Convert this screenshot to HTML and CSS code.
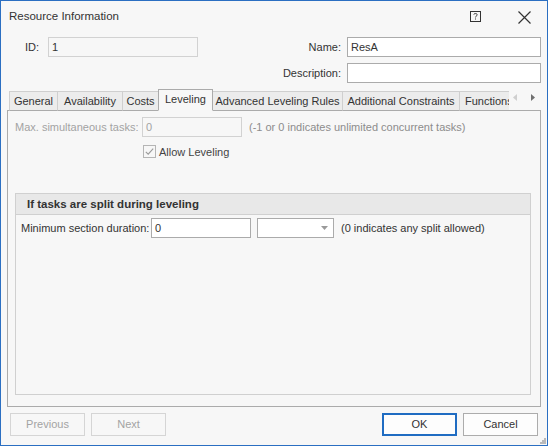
FILE: index.html
```html
<!DOCTYPE html>
<html>
<head>
<meta charset="utf-8">
<link rel="stylesheet" href="styles.css">
</head>
<body>
<div class="dialog">
  <div class="titlebar">
    <span class="title">Resource Information</span>
    <span class="tb-icons">
      <svg class="help-icon" width="11" height="11" viewBox="0 0 11 11">
        <rect x="0.5" y="0.5" width="10" height="10" fill="none" stroke="#333" stroke-width="1"/>
        <path d="M3.8 3.6 C3.8 2.2 7.2 2.2 7.2 3.8 C7.2 5 5.5 5 5.5 6.4" fill="none" stroke="#333" stroke-width="1"/>
        <rect x="5" y="7.5" width="1" height="1" fill="#333"/>
      </svg>
      <svg class="close-icon" width="13" height="13" viewBox="0 0 13 13">
        <path d="M0.5 0.5 L12.5 12.5 M12.5 0.5 L0.5 12.5" stroke="#333" stroke-width="1.2"/>
      </svg>
    </span>
  </div>

  <div class="head-form">
    <div class="frow">
      <span class="lbl id-lbl">ID:</span>
      <div class="inp inp-disabled id-inp">1</div>
      <span class="lbl right-lbl">Name:</span>
      <div class="inp name-inp">ResA</div>
    </div>
    <div class="frow">
      <span class="lbl right-lbl">Description:</span>
      <div class="inp name-inp"></div>
    </div>
  </div>

  <div class="tabstrip">
    <div class="tabs">
      <div class="tab t-general">General</div>
      <div class="tab t-avail">Availability</div>
      <div class="tab t-costs">Costs</div>
      <div class="tab tab-active t-level">Leveling</div>
      <div class="tab t-adv">Advanced Leveling Rules</div>
      <div class="tab t-addc">Additional Constraints</div>
      <div class="tab t-func">Functions</div>
    </div>
    <div class="tab-arrows">
      <svg width="5" height="7" viewBox="0 0 5 7"><path d="M4 0 L0 3.5 L4 7 Z" fill="#cfcfcf"/></svg>
      <svg width="5" height="7" viewBox="0 0 5 7"><path d="M0 0 L4 3.5 L0 7 Z" fill="#707070"/></svg>
    </div>
  </div>

  <div class="tabpage">
    <div class="maxrow">
      <span class="dis-lbl max-lbl">Max. simultaneous tasks:</span>
      <div class="inp inp-disabled max-inp">0</div>
      <span class="note">(-1 or 0 indicates unlimited concurrent tasks)</span>
    </div>
    <div class="chkrow">
      <span class="chk">
        <svg width="13" height="13" viewBox="0 0 13 13">
          <rect x="0.5" y="0.5" width="12" height="12" fill="#f7f7f7" stroke="#b5b5b5"/>
          <path d="M2.8 6.8 L5.2 9.2 L10.2 3.6" fill="none" stroke="#9a9a9a" stroke-width="1.1"/>
        </svg>
      </span>
      <span class="chk-lbl">Allow Leveling</span>
    </div>
    <div class="group">
      <div class="group-head">If tasks are split during leveling</div>
      <div class="grow">
        <span class="lbl min-lbl">Minimum section duration:</span>
        <div class="inp min-inp">0</div>
        <div class="inp combo">
          <svg class="combo-arrow" width="7" height="4" viewBox="0 0 7 4"><path d="M0 0 L7 0 L3.5 4 Z" fill="#9a9a9a"/></svg>
        </div>
        <span class="note2">(0 indicates any split allowed)</span>
      </div>
    </div>
  </div>

  <div class="buttons">
    <div class="btn btn-disabled">Previous</div>
    <div class="btn btn-disabled">Next</div>
    <div class="spacer"></div>
    <div class="btn btn-default">OK</div>
    <div class="btn">Cancel</div>
  </div>

  <svg class="grip" width="6" height="6" viewBox="0 0 6 6">
    <rect x="4" y="0" width="2" height="2" fill="#b9b9b9"/>
    <rect x="2" y="2" width="2" height="2" fill="#b9b9b9"/>
    <rect x="4" y="2" width="2" height="2" fill="#b9b9b9"/>
    <rect x="0" y="4" width="2" height="2" fill="#b9b9b9"/>
    <rect x="2" y="4" width="2" height="2" fill="#b9b9b9"/>
    <rect x="4" y="4" width="2" height="2" fill="#b9b9b9"/>
  </svg>
</div>
</body>
</html>
```
FILE: styles.css
```css
* { box-sizing: border-box; }
html, body { margin: 0; padding: 0; }
body {
  font-family: "Liberation Sans", Arial, sans-serif;
  font-size: 11px;
  color: #333;
  background: #f7f7f7;
}
.dialog {
  position: relative;
  width: 548px;
  height: 446px;
  border: 1px solid #2b6fc2;
  background: #f7f7f7;
  display: flex;
  flex-direction: column;
}
.titlebar {
  height: 31px;
  display: flex;
  align-items: center;
  padding-left: 8px;
  flex-shrink: 0;
}
.title { font-size: 11.5px; color: #333; margin-top: -1px; }
.tb-icons {
  margin-left: auto;
  display: flex;
  align-items: center;
  margin-right: 16px;
}
.help-icon { margin-top: -1px; margin-right: 37px; }
.close-icon { margin-top: 1px; }

.head-form { margin-top: 5px; display: flex; flex-direction: column; gap: 6px; }
.frow { display: flex; align-items: center; height: 20px; margin-right: 6px; }
.lbl { color: #333; white-space: nowrap; }
.id-lbl { margin-left: 24px; width: 23px; }
.right-lbl { flex: 1; text-align: right; padding-right: 6px; }
.inp {
  height: 20px;
  border: 1px solid #ababab;
  background: #fff;
  padding: 0 3px;
  line-height: 18px;
  color: #333;
}
.inp-disabled { border-color: #d2d2d2; background: #f7f7f7; }
.id-inp { width: 150px; }
.name-inp { width: 194px; }

.tabstrip {
  margin-top: 6px;
  height: 21px;
  display: flex;
  align-items: flex-end;
  margin-left: 8px;
  margin-right: 6px;
  position: relative;
  z-index: 1;
}
.tabs {
  display: flex;
  align-items: flex-end;
  width: 500px;
  overflow: hidden;
  height: 22px;
  margin-bottom: -1px;
}
.tab {
  height: 20px;
  border: 1px solid #cfcfcf;
  border-bottom: 1px solid #ababab;
  background: #ececec;
  margin-right: -1px;
  text-align: center;
  line-height: 18px;
  white-space: nowrap;
  flex-shrink: 0;
  color: #333;
}
.tab-active {
  height: 22px;
  border-color: #ababab;
  border-bottom-color: #f7f7f7;
  background: #f7f7f7;
  position: relative;
  z-index: 2;
  line-height: 19px;
}
.t-general { width: 49px; }
.t-avail { width: 66px; }
.t-costs { width: 37px; }
.t-level { width: 55px; }
.t-adv { width: 131px; }
.t-addc { width: 118px; }
.t-func { width: 56px; text-align: left; padding-left: 5px; }
.tab-arrows {
  display: flex;
  gap: 13px;
  align-items: center;
  height: 21px;
  padding-left: 4px;
  padding-bottom: 5px;
}

.tabpage {
  height: 297px;
  margin-left: 6px;
  margin-right: 6px;
  border: 1px solid #ababab;
  padding: 6px 0 0 7px;
  flex-shrink: 0;
}
.maxrow { display: flex; align-items: center; height: 20px; }
.dis-lbl { color: #a3a3a3; white-space: nowrap; }
.max-lbl { width: 127px; }
.max-inp { width: 100px; color: #a3a3a3; }
.note { margin-left: 7px; color: #8c8c8c; white-space: nowrap; }
.chkrow { display: flex; align-items: center; margin-top: 8px; margin-left: 128px; height: 13px; }
.chk { display: flex; width: 13px; height: 13px; }
.chk-lbl { margin-left: 3px; color: #444; }

.group {
  margin-top: 35px;
  width: 516px;
  height: 202px;
  border: 1px solid #d0d0d0;
}
.group-head {
  height: 21px;
  background: #e8e8e8;
  border-bottom: 1px solid #d0d0d0;
  font-weight: bold;
  font-size: 11.5px;
  color: #333;
  padding-left: 11px;
  line-height: 20px;
}
.grow { display: flex; align-items: center; height: 20px; margin-top: 3px; padding-left: 5px; }
.min-lbl { width: 130px; flex-shrink: 0; }
.min-inp { width: 100px; flex-shrink: 0; }
.combo { width: 77px; margin-left: 6px; position: relative; display: flex; align-items: center; justify-content: flex-end; padding-right: 5px; }
.note2 { margin-left: 7px; color: #333; white-space: nowrap; }

.buttons {
  display: flex;
  margin-top: 6px;
  padding: 0 9px;
  gap: 6px;
  height: 23px;
}
.spacer { flex: 1; }
.btn {
  width: 75px;
  height: 23px;
  border: 1px solid #acacac;
  background: #fdfdfd;
  text-align: center;
  line-height: 21px;
  color: #333;
}
.btn-disabled { border-color: #d5d5d5; background: #f7f7f7; color: #a3a3a3; }
.btn-default { border: 2px solid #1f6cc2; line-height: 19px; }
.grip { position: absolute; right: 1px; bottom: 1px; }
```
